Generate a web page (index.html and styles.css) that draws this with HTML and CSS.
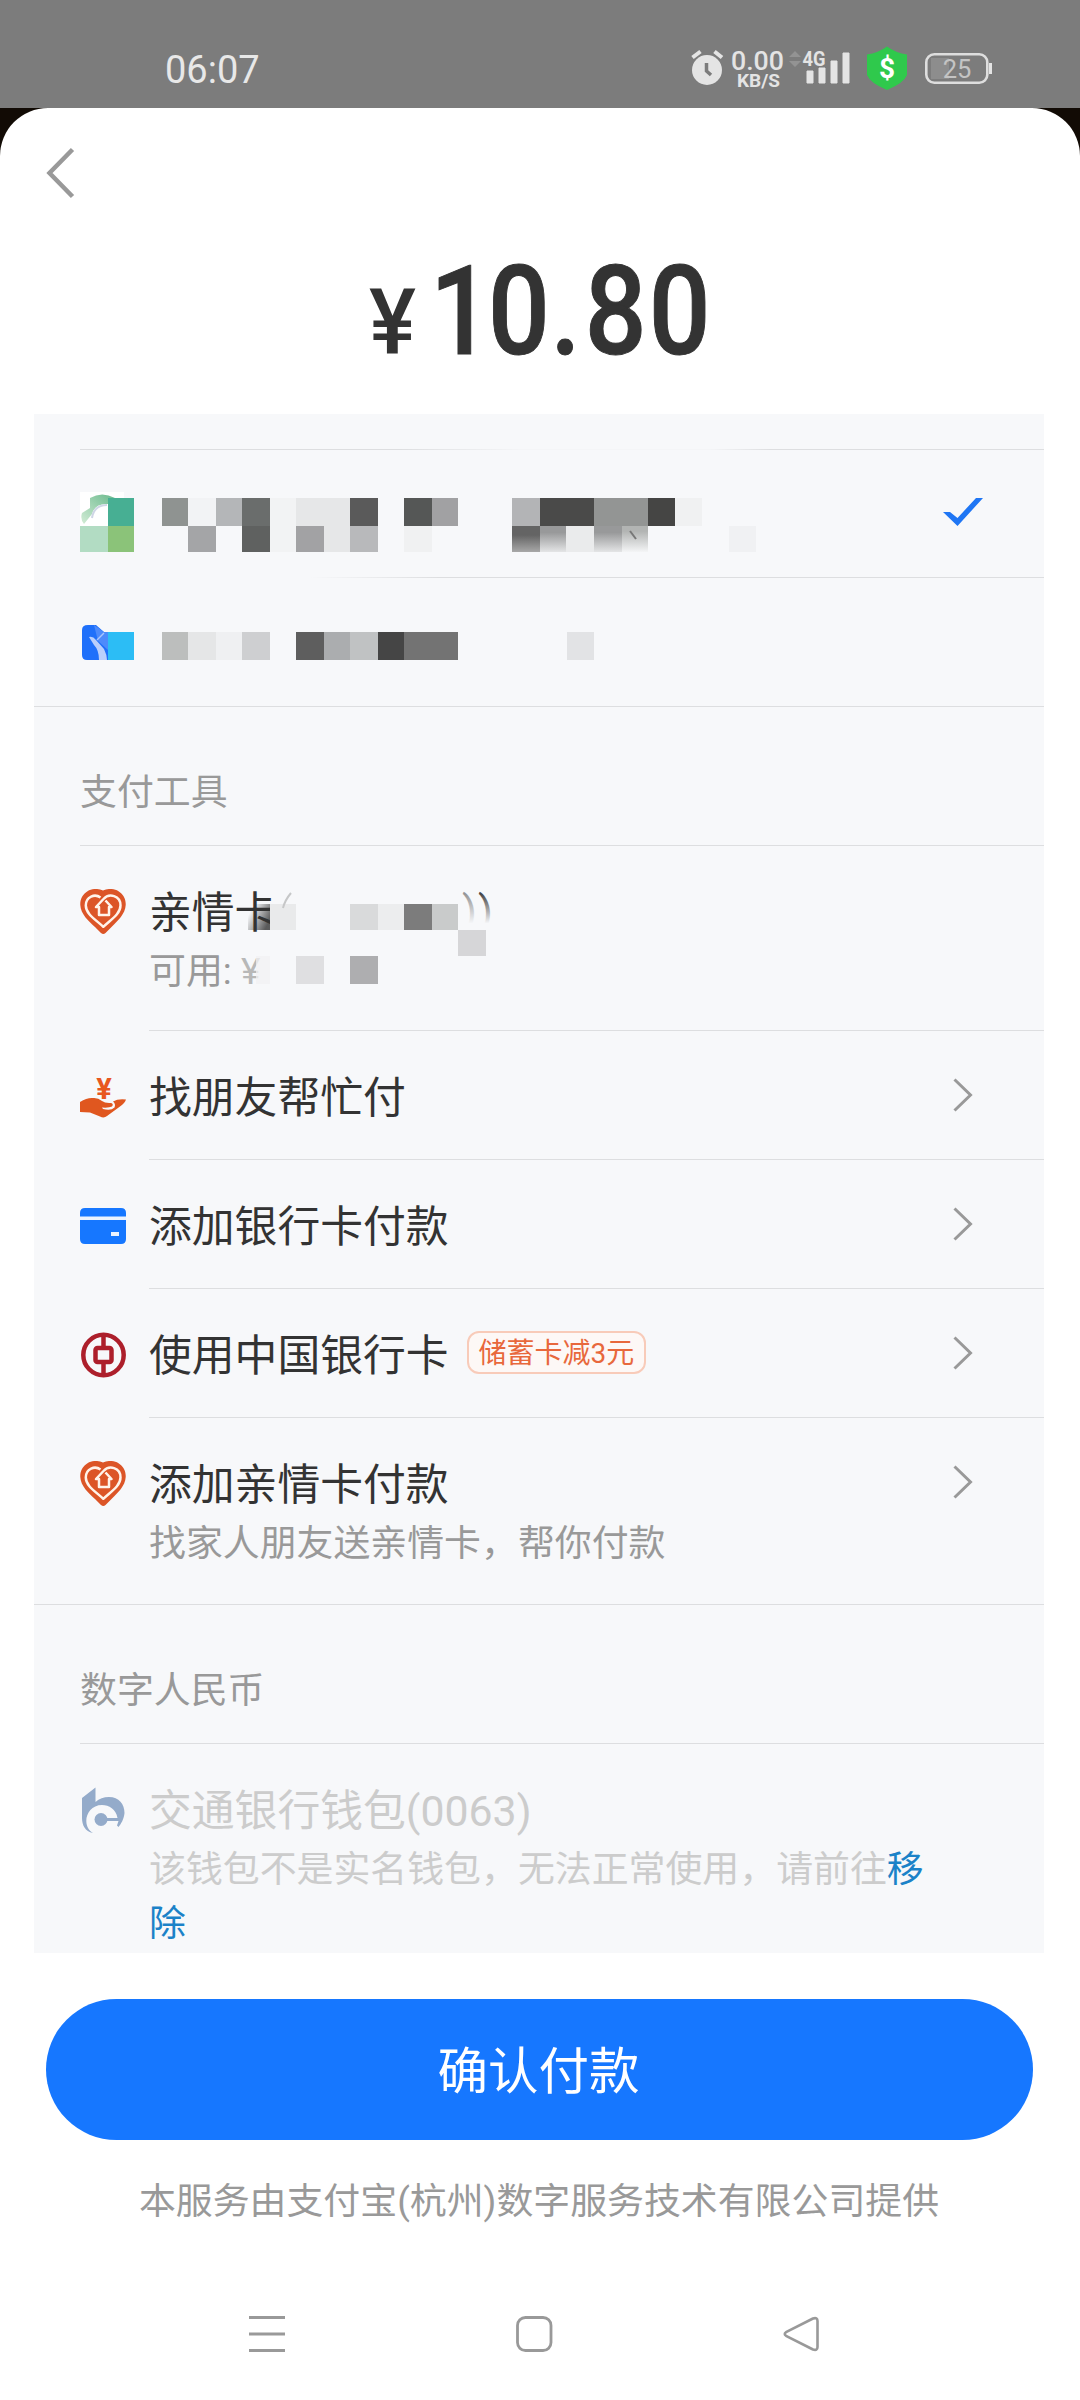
FILE: index.html
```html
<!DOCTYPE html>
<html lang="zh-CN">
<head>
<meta charset="utf-8">
<title>确认付款</title>
<link rel="stylesheet" href="styles.css">
</head>
<body>
<svg class="defs" width="0" height="0" aria-hidden="true">
  <symbol id="heart" viewBox="0 0 46 46">
    <path fill="#dc5527" d="M23 1.6C28-.8 34-.6 38.500 2.200C43.500 5.200 46 10.500 45.700 16C45.300 25 37.500 32 31.500 38L25.500 44Q23.300 46 21 44L15 38C8.500 32 .7 25 .3 16C0 10.500 2.500 5.200 7.500 2.200C12 -.6 18-.8 23 1.600Z"/>
    <path fill="none" stroke="#fff3ea" stroke-width="2.500" stroke-linejoin="round" d="M20.500 8.500C15 4.500 5.800 7.300 5.800 16.500C5.800 25 15.500 30.500 23.300 37.800C31 30.500 40.500 25 40.500 16.500C40.500 6.500 29 3.800 23.500 10L16 18H19V26H29V18H31.500L25.500 11.500"/>
  </symbol>
  <symbol id="arrow" viewBox="0 0 22 36">
    <path fill="none" stroke="#999" stroke-width="3" d="M2.500 2.500L18.500 18L2.500 33.500"/>
  </symbol>
</svg>

<header class="status">
  <span class="clock">06:07</span>
  <svg class="status-icons" width="340" height="60" viewBox="0 0 340 60" fill="#e4e4e4">
    <circle cx="27" cy="31" r="15"/>
    <path fill="none" stroke="#e4e4e4" stroke-width="4" d="M12.500 18.500L20.500 12.500M34.500 12.500L42 18.500"/>
    <path fill="none" stroke="#7c7c7c" stroke-width="3.500" d="M26.500 24V32L31 36"/>
    <text class="st" x="51" y="30.500" font-size="25" font-weight="500" textLength="53" lengthAdjust="spacingAndGlyphs">0.00</text>
    <text class="st" x="57" y="47.500" font-size="19" font-weight="700" textLength="43" lengthAdjust="spacingAndGlyphs">KB/S</text>
    <path fill="#939393" d="M109 18L115 12L121 18ZM109 22H121L115 28Z"/>
    <text class="st" x="122.500" y="27" font-size="21" font-weight="700" textLength="23" lengthAdjust="spacingAndGlyphs">4G</text>
    <path d="M127 32h6v12h-6zM139 29h6v15h-6zM151 22h6v22h-6zM163 14h6v30h-6z" stroke="#e4e4e4" stroke-linejoin="round"/>
    <path fill="#2fc94c" d="M207 7.500Q216 14 227 15.500V36Q224 44 207 51Q190 44 187 36V15.500Q198 14 207 7.500Z"/>
    <text class="st" x="207" y="39" font-size="28" font-weight="700" fill="#fff" text-anchor="middle">$</text>
    <rect x="246.300" y="15.300" width="61" height="28.400" rx="8" fill="none" stroke="#dedede" stroke-width="2.600"/>
    <path fill="#8d8d8d" d="M251 19h18v21h-18z"/>
    <path d="M309 24h3v11h-3z"/>
    <text class="st" x="277" y="38.500" font-size="25.500" fill="#c4c4c4" text-anchor="middle">25</text>
  </svg>
</header>

<main class="sheet">
  <svg class="back" width="30" height="52" viewBox="0 0 30 52"><path fill="none" stroke="#999" stroke-width="4.500" d="M26.500 2.500L3.500 26L26.500 49.500"/></svg>

  <div class="amount">
    <svg width="360" height="110" viewBox="0 0 360 110" fill="#333">
      <text class="st" x="9" y="93" font-size="91" font-weight="500" textLength="47" lengthAdjust="spacingAndGlyphs">¥</text>
      <text class="st" transform="translate(70 94) scale(.88 1)" font-size="123.500" font-weight="500" stroke="#333" stroke-width="1"><tspan x="0">1</tspan><tspan x="66">0</tspan><tspan x="137">.</tspan><tspan x="176">8</tspan><tspan x="248.500">0</tspan></text>
    </svg>
  </div>

  <section class="panel">
    <div class="gap-top"></div>

    <div class="bank bank-a">
      <svg width="700" height="66" viewBox="80 492 700 66">
        <defs>
          <linearGradient id="fa" x1="0" y1="0" x2="0" y2="1"><stop offset=".35" stop-color="#646464"/><stop offset="1" stop-color="#a8a8a8"/></linearGradient>
          <linearGradient id="fb" x1="0" y1="0" x2="0" y2="1"><stop offset=".25" stop-color="#98999a"/><stop offset="1" stop-color="#e4e5e6"/></linearGradient>
          <linearGradient id="fc" x1="0" y1="0" x2="0" y2="1"><stop offset=".2" stop-color="#b2b4b3"/><stop offset="1" stop-color="#f4f5f6"/></linearGradient>
          <linearGradient id="ring" x1="0" y1="1" x2="1" y2="0"><stop offset="0" stop-color="#d3ecd6"/><stop offset="1" stop-color="#69b98c"/></linearGradient>
        </defs>
        <path fill="#fff" d="M80 492h44v34h-44z"/>
        <path fill="url(#ring)" d="M90 498Q102 491 115 498L108 504Q95 503 92 514L84 524Q80 519 82 513L90 508Z"/>
        <path fill="none" stroke="#cfd6e6" stroke-width="2" d="M92 518Q94 505 107 505"/>
        <path fill="#47af93" d="M108 498h26v28h-26z"/><path fill="#b2dcc3" d="M80 526h28v26h-28z"/><path fill="#8bc379" d="M108 526h26v26h-26z"/>
        <path fill="#8f9391" d="M162 498h26v28h-26z"/><path fill="#f2f3f5" d="M188 498h28v28h-28z"/><path fill="#b4b6b8" d="M216 498h26v28h-26z"/><path fill="#6a6d6c" d="M242 498h28v28h-28z"/>
        <path fill="#a4a5a7" d="M188 526h28v26h-28z"/><path fill="#5f6160" d="M242 526h28v26h-28z"/><path fill="#f2f3f4" d="M270 498h26v54h-26z"/>
        <path fill="#e6e7e8" d="M296 498h54v28h-54zM324 526h26v26h-26z"/><path fill="#5a5a5a" d="M350 498h28v28h-28z"/><path fill="#a2a2a4" d="M296 526h28v26h-28z"/><path fill="#b8b9bb" d="M350 526h28v26h-28z"/>
        <path fill="#555756" d="M404 498h28v28h-28z"/><path fill="#a1a1a3" d="M432 498h26v28h-26z"/><path fill="#f0f1f2" d="M404 526h28v26h-28z"/>
        <path fill="#b3b4b6" d="M512 498h28v28h-28z"/><path fill="#4a4a49" d="M540 498h54v28h-54z"/><path fill="#939594" d="M594 498h54v28h-54z"/><path fill="#454544" d="M648 498h27v28h-27z"/><path fill="#f0f1f2" d="M675 498h27v28h-27z"/>
        <path fill="url(#fa)" d="M512 526h28v26h-28z"/><path fill="url(#fb)" d="M540 526h26v26h-26z"/><path fill="#eaebec" d="M566 526h28v26h-28z"/><path fill="url(#fb)" d="M594 526h28v26h-28z"/><path fill="url(#fc)" d="M622 526h26v26h-26z"/>
        <path stroke="#777" stroke-width="2" d="M630 531l6 8"/><path fill="#f0f1f3" d="M729 526h27v26h-27z"/>
      </svg>
      <svg class="check" width="40" height="28" viewBox="0 0 40 28"><path fill="#1f76f4" d="M0 14H7L14.500 20L33 0H40L14.500 28Z"/></svg>
    </div>

    <div class="bank-b">
      <svg width="700" height="40" viewBox="80 624 700 40">
        <path fill="#1f70fa" d="M88 625H96L104 632H108V660H87Q82 660 82 655V630Q82 625 88 625Z"/>
        <path fill="#4d8bfb" d="M94 625L104 632H108V650L98 641Z"/>
        <path fill="#b9cffc" d="M89 637Q93 636 96 640L104 649Q107 655 107 660H99Q99 650 94 645Z"/><path stroke="#a9c6fd" stroke-width="1.500" d="M97 640L104 633"/>
        <path fill="#2cbdf5" d="M108 632h26v28h-26z"/>
        <path fill="#bcbebd" d="M162 632h26v28h-26z"/><path fill="#e5e6e7" d="M188 632h28v28h-28z"/><path fill="#eff0f2" d="M216 632h26v28h-26z"/><path fill="#cecfd1" d="M242 632h28v28h-28z"/>
        <path fill="#5e5e5e" d="M296 632h28v28h-28z"/><path fill="#abadaf" d="M324 632h26v28h-26z"/><path fill="#c0c2c3" d="M350 632h28v28h-28z"/><path fill="#454545" d="M378 632h26v28h-26z"/><path fill="#737373" d="M404 632h54v28h-54z"/><path fill="#e2e3e5" d="M567 632h27v28h-27z"/>
      </svg>
    </div>

    <h2 class="head">支付工具</h2>

    <div class="row tall">
      <svg class="icon"><use href="#heart"/></svg>
      <div class="body">
        <div class="text"><div class="title">亲情卡</div><div class="sub">可用: <span class="fading">¥</span></div></div>
        <svg class="mosaic" width="270" height="110" viewBox="240 885 270 110">
          <defs>
            <linearGradient id="ma" x1="0" y1="0" x2="1" y2=".6"><stop offset=".2" stop-color="#333" stop-opacity="0"/><stop offset="1" stop-color="#333" stop-opacity=".8"/></linearGradient>
            <linearGradient id="mb" x1="0" y1="0" x2="0" y2="1"><stop offset=".15" stop-color="#444"/><stop offset=".75" stop-color="#444" stop-opacity="0"/></linearGradient>
          </defs>
          <path fill="url(#ma)" d="M248 904h22v26h-22z"/><path fill="#e9eaeb" d="M270 904h26v26h-26z"/>
          <path fill="none" stroke="#c6c7c8" stroke-width="2" d="M291 893Q285 900 283 908"/>
          <path fill="#d9dadb" d="M350 904h28v26h-28z"/><path fill="#ecedee" d="M378 904h26v26h-26z"/><path fill="#7c7c7c" d="M404 904h28v26h-28z"/><path fill="#c9cbcb" d="M432 904h26v26h-26z"/><path fill="#d6d6d8" d="M458 930h28v26h-28z"/>
          <text class="st" x="462" y="926" font-size="43" fill="url(#mb)" opacity=".55">)</text><text class="st" x="478" y="926" font-size="43" fill="url(#mb)">)</text>
          <path fill="#f1f2f3" opacity=".75" d="M256 956h14v28h-14z"/><path fill="#dfdfe1" d="M296 956h28v28h-28z"/><path fill="#aeaeb0" d="M350 956h28v28h-28z"/>
        </svg>
      </div>
    </div>

    <div class="row">
      <svg class="icon" viewBox="0 0 46 46">
        <text class="st" x="24" y="24.500" font-size="29" font-weight="700" fill="#e8571f" text-anchor="middle">¥</text>
        <path fill="#e0571f" d="M0 28Q7 23.500 13 24Q18 23.500 22 27Q25 29.500 31 29Q34 30 32 32.500Q29 34 22 33.500L23 35Q31 37 34.500 33.500Q36 30 33 27.500Q38 24.500 46 25.500Q45 29 40 32.500L27 42Q24 44.500 20 42.500L10 38.500L0 38Z"/>
      </svg>
      <div class="body"><div class="title">找朋友帮忙付</div><svg class="arrow"><use href="#arrow"/></svg></div>
    </div>

    <div class="row">
      <svg class="icon" viewBox="0 0 46 46">
        <path fill="#1677ff" d="M5 5H41Q46 5 46 10V36Q46 41 41 41H5Q0 41 0 36V10Q0 5 5 5Z"/><path fill="#eaf3ff" d="M0 13.500h46v3.500h-46zM31 29h8v4h-8z"/>
      </svg>
      <div class="body"><div class="title">添加银行卡付款</div><svg class="arrow"><use href="#arrow"/></svg></div>
    </div>

    <div class="row">
      <svg class="icon" viewBox="0 0 46 46" fill="none" stroke="#ad1f2b" stroke-width="4.500">
        <circle cx="23.500" cy="23" r="20.200"/><rect x="15.500" y="16" width="16" height="14" rx="2"/><path d="M23.500 3V15M23.500 31V43"/>
      </svg>
      <div class="body"><div class="title">使用中国银行卡</div><span class="tag">储蓄卡减3元</span><svg class="arrow"><use href="#arrow"/></svg></div>
    </div>

    <div class="row tall last">
      <svg class="icon"><use href="#heart"/></svg>
      <div class="body">
        <div class="text"><div class="title">添加亲情卡付款</div><div class="sub">找家人朋友送亲情卡，帮你付款</div></div>
        <svg class="arrow"><use href="#arrow"/></svg>
      </div>
    </div>

    <h2 class="head">数字人民币</h2>

    <div class="row wallet">
      <svg class="icon" viewBox="0 0 46 46" fill="#94abca">
        <path d="M2 11L15.500 .5V15Q21 10 29 10C39 10 44.500 17 44.500 26C44 32 41 37 38.500 40L37 38.500L38.500 34H21V31H37.500C36 22 29 18 22 18C12 18 6.300 26 6.300 34C6.500 40 9 43.500 13 46C5 44.500 2 38 2 31Z"/>
        <circle cx="21" cy="32.500" r="6.500"/>
      </svg>
      <div class="body"><div class="text"><div class="title">交通银行钱包(0063)</div><div class="sub">该钱包不是实名钱包，无法正常使用，请前往<a class="link">移除</a></div></div></div>
    </div>
  </section>

  <button class="confirm">确认付款</button>
  <p class="provider">本服务由支付宝(杭州)数字服务技术有限公司提供</p>

  <nav class="nav">
    <svg width="38" height="38" viewBox="0 0 38 38"><path stroke="#999" stroke-width="3" d="M1 2.500h36M1 19h36M1 35.500h36"/></svg>
    <svg width="38" height="38" viewBox="0 0 38 38"><rect x="2.500" y="2.500" width="33.500" height="33" rx="8" fill="none" stroke="#999" stroke-width="2.800"/></svg>
    <svg width="38" height="38" viewBox="0 0 38 38"><path fill="none" stroke="#999" stroke-width="2.600" stroke-linejoin="round" d="M4 17.200L31 3.500Q35.500 2 35.500 6V32Q35.500 36 31 34.500L4 20.800Q1.500 19 4 17.200Z"/></svg>
  </nav>
</main>
</body>
</html>
```

FILE: styles.css
```css
* { box-sizing: border-box; }

body {
  margin: 0;
  width: 1080px;
  height: 2400px;
  overflow: hidden;
  background: #120b05;
  color: #333;
  font-family: Roboto, "Noto Sans CJK SC", sans-serif;
}

svg { display: block; flex: none; overflow: visible; }
.defs { position: absolute; }
.st { font-family: Roboto, sans-serif; }

.status {
  display: flex;
  align-items: flex-start;
  justify-content: space-between;
  height: 108px;
  padding: 39px 60px 0 165px;
  background: #7c7c7c;
}
.clock {
  margin-top: 9px;
  color: #e8e8e8;
  font-size: 38px;
  line-height: 44px;
}

.sheet {
  display: flex;
  flex-direction: column;
  height: 2292px;
  background: #fff;
  border-radius: 48px 48px 0 0;
}
.back { margin: 39px 0 0 46px; }
.amount {
  display: flex;
  justify-content: center;
  height: 110px;
  margin-top: 61px;
}

.panel {
  flex: none;
  width: 1010px;
  height: 1539px;
  margin: 44px 0 0 34px;
  overflow: hidden;
  background: #f7f8fa;
}
.gap-top {
  height: 36px;
  margin-left: 46px;
  border-bottom: 1px solid;
  border-image: linear-gradient(90deg, #dddee0 0, #dddee0 320px, #f4f5f7 440px, #f4f5f7 630px, #dddee0 690px) 1;
}
.bank {
  display: flex;
  justify-content: space-between;
  margin-left: 46px;
}
.bank-a {
  height: 128px;
  padding: 42px 61px 0 0;
  border-bottom: 1px solid;
  border-image: linear-gradient(90deg, transparent 230px, #dddee0 360px) 1;
}
.check { margin-top: 6px; }
.bank-b {
  height: 129px;
  padding: 46px 0 0 46px;
  border-bottom: 1px solid #dddee0;
}

.head {
  height: 139px;
  margin: 0 0 0 46px;
  padding-top: 61px;
  border-bottom: 1px solid #dddee0;
  color: #999;
  font-size: 36.9px;
  font-weight: 400;
  line-height: 50px;
}

.row {
  display: flex;
  gap: 23px;
  height: 129px;
  padding-left: 46px;
}
.icon { width: 46px; height: 46px; margin-top: 43px; }
.body {
  position: relative;
  display: flex;
  flex: 1;
  align-items: flex-start;
  padding: 37px 70px 0 0;
  border-bottom: 1px solid #dddee0;
}
.title { font-size: 42.8px; line-height: 60px; white-space: nowrap; }
.sub { padding-top: 2px; color: #999; font-size: 36.9px; line-height: 54px; }
.fading { color: #b8b8b8; }
.arrow { width: 22px; height: 36px; margin: 9px 0 0 auto; }
.tall { height: 185px; }
.last { height: 187px; border-bottom: 1px solid #dddee0; }
.last .body, .wallet .body { border-bottom: 0; }
.mosaic { position: absolute; left: 91px; top: 39px; }

.tag {
  height: 43px;
  margin: 5px 0 0 18px;
  padding: 0 10px;
  border: 2px solid #f8cbb9;
  border-radius: 12px;
  background: #fdf8f6;
  color: #e8683c;
  font-size: 28px;
  line-height: 41px;
}

.wallet { height: 211px; }
.wallet .text { width: 790px; }
.wallet .title, .wallet .sub { color: #ccc; }
.link { color: #1b82c8; }

.confirm {
  flex: none;
  width: 987px;
  height: 141px;
  margin: 46px 0 0 46px;
  padding: 4px 2px 0 0;
  border: 0;
  border-radius: 71px;
  background: #1677ff;
  color: #fff;
  font: 50.5px/60px Roboto, "Noto Sans CJK SC", sans-serif;
}
.provider {
  margin: 37px 0 0;
  padding-right: 2px;
  color: #999;
  font-size: 36.9px;
  line-height: 50px;
  text-align: center;
}
.nav {
  display: flex;
  justify-content: space-between;
  margin-top: 88px;
  padding: 0 260px 0 248px;
}
```
